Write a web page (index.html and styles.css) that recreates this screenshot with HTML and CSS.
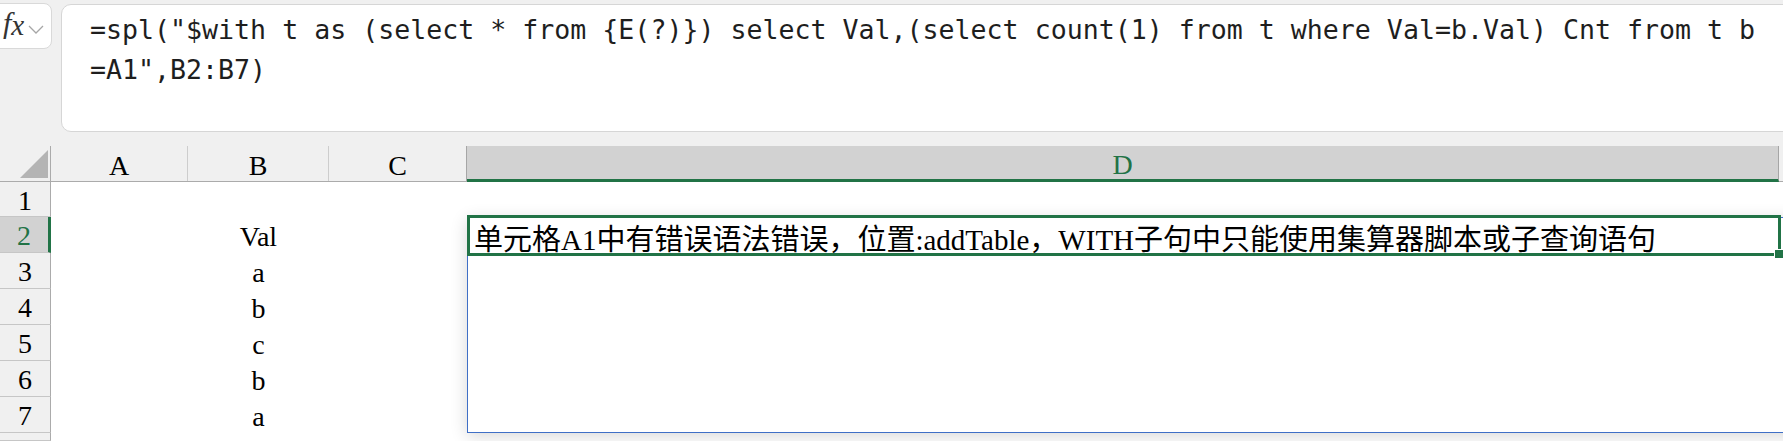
FILE: index.html
```html
<!DOCTYPE html>
<html lang="zh-CN">
<head>
    <meta charset="UTF-8">
    <title>Sheet - formula error</title>
    <link rel="stylesheet" href="styles.css">
</head>
<body>
    <div class="formula-bar">
        <div class="fx-box">
            <span class="fx">f<span class="fx-sub">x</span></span>
            <svg class="chev" width="16" height="10" viewBox="0 0 16 10"><polyline points="1,1 8,8 15,1" fill="none" stroke="#a6a6a6" stroke-width="1.3"/></svg>
        </div>
        <div class="formula">=spl("$with t as (select * from {E(?)}) select Val,(select count(1) from t where Val=b.Val) Cnt from t b
=A1",B2:B7)</div>
    </div>

    <div class="sheet">
        <div class="head-row">
            <div class="corner"><span class="tri"></span></div>
            <div class="ch col-a">A</div>
            <div class="ch col-b">B</div>
            <div class="ch col-c">C</div>
            <div class="ch col-d active">D</div>
            <div class="ch col-e"></div>
        </div>

        <div class="row first">
            <div class="rh">1</div>
            <div class="c col-a"></div><div class="c col-b"></div><div class="c col-c"></div><div class="c col-d"></div>
        </div>
        <div class="row current">
            <div class="rh">2</div>
            <div class="c col-a"></div><div class="c col-b">Val</div><div class="c col-c"></div>
            <div class="c col-d">
                <div class="sel"><span class="handle"></span></div>
                <span class="err">单元格A1中有错误语法错误，位置:addTable，WITH子句中只能使用集算器脚本或子查询语句</span>
            </div>
        </div>
        <div class="row">
            <div class="rh">3</div>
            <div class="c col-a"></div><div class="c col-b">a</div><div class="c col-c"></div><div class="c col-d"></div>
        </div>
        <div class="row">
            <div class="rh">4</div>
            <div class="c col-a"></div><div class="c col-b">b</div><div class="c col-c"></div><div class="c col-d"></div>
        </div>
        <div class="row">
            <div class="rh">5</div>
            <div class="c col-a"></div><div class="c col-b">c</div><div class="c col-c"></div><div class="c col-d"></div>
        </div>
        <div class="row">
            <div class="rh">6</div>
            <div class="c col-a"></div><div class="c col-b">b</div><div class="c col-c"></div><div class="c col-d"></div>
        </div>
        <div class="row">
            <div class="rh">7</div>
            <div class="c col-a"></div><div class="c col-b">a</div><div class="c col-c"></div><div class="c col-d"></div>
        </div>
        <div class="row last">
            <div class="rh"></div>
            <div class="c col-a"></div><div class="c col-b"></div><div class="c col-c"></div><div class="c col-d"></div>
        </div>

        <!-- dropdown panel under the edited cell -->
        <div class="popup"></div>
    </div>
</body>
</html>
```

FILE: styles.css
```css
body, html {
    margin: 0;
    padding: 0;
    width: 1783px;
    height: 441px;
    overflow: hidden;
    background: #ffffff;
    font-family: 'Liberation Serif', 'Noto Sans CJK SC', serif;
}
.formula-bar {
    display: flex;
    align-items: flex-start;
    height: 146px;
    padding-top: 3px;
    box-sizing: border-box;
    background-color: #f0f0f0;
}
.fx-box {
    display: flex;
    align-items: center;
    gap: 4px;
    width: 60px;
    height: 46px;
    margin-left: -8px;
    padding-left: 10px;
    box-sizing: border-box;
    background: #ffffff;
    border: 1px solid #d9d9d9;
    border-radius: 8px;
}
.fx {
    font-family: 'Liberation Serif', serif;
    font-style: italic;
    font-size: 30px;
    line-height: 30px;
    color: #333333;
    margin-top: -6px;
}
.fx-sub {
    font-size: 29px;
    position: relative;
    top: 2px;
}
.chev {
    margin-top: 8px;
}
.formula {
    flex: 1;
    height: 128px;
    margin-left: 9px;
    margin-top: 1px;
    margin-right: -20px;
    padding: 5px 0 0 28px;
    box-sizing: border-box;
    background: #ffffff;
    border: 1px solid #d6d6d6;
    border-radius: 10px;
    font-family: 'DejaVu Sans Mono', monospace;
    font-size: 26.6px;
    line-height: 40px;
    color: #1e1e1e;
    white-space: pre;
}
.sheet {
    position: relative;
}
.head-row {
    display: flex;
    height: 36px;
    background-color: #f0f0f0;
    border-bottom: 1px solid #ababab;
    box-sizing: border-box;
}
.corner {
    position: relative;
    width: 51px;
    flex: 0 0 51px;
    border-right: 1px solid #ababab;
    box-sizing: border-box;
}
.tri {
    position: absolute;
    right: 2px;
    bottom: 3px;
    width: 0;
    height: 0;
    border-left: 28px solid transparent;
    border-bottom: 28px solid #b4b4b4;
}
.ch {
    display: flex;
    align-items: center;
    justify-content: center;
    font-size: 28px;
    color: #000000;
    border-right: 1px solid #cdcdcd;
    box-sizing: border-box;
    padding-top: 4px;
}
.col-a { flex: 0 0 137px; }
.col-b { flex: 0 0 141px; }
.col-c { flex: 0 0 138px; }
.col-d { flex: 0 0 1312px; }
.col-e { flex: 1; border-right: none; }
.ch.col-c { border-right-color: #a6a6a6; }
.ch.active {
    background-color: #d2d2d2;
    color: #217346;
    border-bottom: 3px solid #217346;
    border-right: 1px solid #a6a6a6;
    margin-bottom: -1px;
}
.row {
    display: flex;
    height: 36px;
}
.row.first {
    height: 35px;
}
.row.last {
    height: 8px;
}
.rh {
    flex: 0 0 51px;
    display: flex;
    align-items: center;
    justify-content: center;
    padding-top: 3px;
    box-sizing: border-box;
    background-color: #f0f0f0;
    border-right: 1px solid #ababab;
    border-bottom: 1px solid #c6c6c6;
    font-size: 28px;
    color: #000000;
}
.row.current .rh {
    background-color: #d2d2d2;
    color: #217346;
    border-right: 3px solid #217346;
}
.c {
    display: flex;
    align-items: center;
    justify-content: center;
    padding-top: 4px;
    box-sizing: border-box;
    font-size: 28px;
    color: #000000;
}
.c.col-d {
    position: relative;
    justify-content: flex-start;
}
.err {
    position: relative;
    z-index: 3;
    padding-left: 7px;
    font-size: 29px;
    white-space: nowrap;
    color: #000000;
}
.sel {
    position: absolute;
    top: -2px;
    left: 0;
    right: -2px;
    bottom: -3px;
    border: 3px solid #217346;
    z-index: 2;
}
.handle {
    position: absolute;
    right: -6px;
    bottom: -6px;
    width: 8px;
    height: 8px;
    background-color: #217346;
    border: 1px solid #ffffff;
}
.popup {
    position: absolute;
    top: 71px;
    left: 467px;
    width: 1400px;
    height: 216px;
    box-sizing: border-box;
    background: #ffffff;
    border: 1px solid #3f6fc6;
    box-shadow: 0 3px 16px rgba(0, 0, 0, 0.16);
    z-index: 1;
}
```
